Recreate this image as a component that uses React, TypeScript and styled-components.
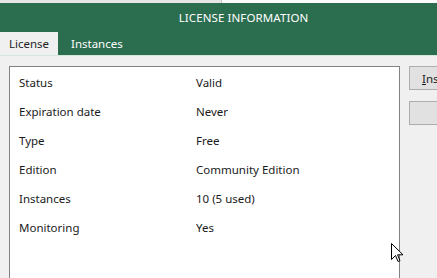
import React from 'react'
import styled, { createGlobalStyle } from 'styled-components'

const GlobalStyle = createGlobalStyle`
  html, body {
    margin: 0;
    padding: 0;
    background: #f0f0f0;
    font-family: 'Noto Sans', 'Open Sans', sans-serif;
    overflow: hidden;
  }
`

const Page = styled.div`
  position: relative;
  width: 437px;
  height: 278px;
  display: flex;
  flex-direction: column;
  overflow: hidden;
`

const TopStrip = styled.div`
  display: flex;
  height: 3px;
`

const StripSeg = styled.div<{ $light?: boolean }>`
  width: ${(p) => (p.$light ? 'auto' : '221px')};
  flex: ${(p) => (p.$light ? '1' : 'none')};
  background: ${(p) => (p.$light ? '#fbfbfb' : '#e6e6e6')};
  border-right: ${(p) => (p.$light ? 'none' : '1px solid #c9c9c9')};
`

const Header = styled.div`
  background: #2b6d4f;
  display: flex;
  flex-direction: column;
`

const Title = styled.div`
  height: 29px;
  display: flex;
  align-items: center;
  justify-content: center;
  padding-left: 50px;
  color: #ffffff;
  font-size: 11.5px;
  letter-spacing: 0.1px;
`

const TabRow = styled.div`
  display: flex;
  height: 23px;
`

const Tab = styled.div<{ $active?: boolean }>`
  display: flex;
  align-items: center;
  padding: 0 ${(p) => (p.$active ? '10px' : '13px')} 0 ${(p) => (p.$active ? '9px' : '13px')};
  width: ${(p) => (p.$active ? '58px' : 'auto')};
  box-sizing: border-box;
  background: ${(p) => (p.$active ? '#f0f0f0' : 'transparent')};
  color: ${(p) => (p.$active ? '#1e1e1e' : '#ffffff')};
  font-size: 11.5px;
`

const Body = styled.div`
  flex: 1;
  display: flex;
  gap: 9px;
  padding: 10px 0 0 9px;
  border-top: 1px solid #d4e7dc;
`

const Panel = styled.div`
  width: 391px;
  flex-shrink: 0;
  box-sizing: border-box;
  background: #ffffff;
  border: 1px solid #828282;
  border-bottom: none;
  padding: 1px 0 0 9px;
  display: flex;
  flex-direction: column;
`

const Row = styled.div`
  height: 29px;
  display: flex;
  align-items: center;
  font-size: 11.5px;
  color: #1a1a1a;
`

const Label = styled.span`
  width: 177px;
`

const Side = styled.div`
  display: flex;
  flex-direction: column;
  gap: 11px;
  flex: 1;
  min-width: 0;
`

const Button = styled.div`
  height: 24px;
  box-sizing: border-box;
  background: #e1e1e1;
  border: 1px solid #adadad;
  border-right: none;
  padding-left: 12px;
  display: flex;
  align-items: center;
  font-size: 11.5px;
  color: #1a1a1a;
  white-space: nowrap;
  overflow: hidden;

  u {
    text-decoration: underline;
  }
`

const Cursor = styled.svg`
  position: absolute;
  left: 391px;
  top: 243px;
`

const ROWS = [
  ['Status', 'Valid'],
  ['Expiration date', 'Never'],
  ['Type', 'Free'],
  ['Edition', 'Community Edition'],
  ['Instances', '10 (5 used)'],
  ['Monitoring', 'Yes'],
]

export default function App() {
  return (
    <Page>
      <GlobalStyle />
      <TopStrip>
        <StripSeg />
        <StripSeg $light />
      </TopStrip>
      <Header>
        <Title>LICENSE INFORMATION</Title>
        <TabRow>
          <Tab $active>License</Tab>
          <Tab>Instances</Tab>
        </TabRow>
      </Header>
      <Body>
        <Panel>
          {ROWS.map(([label, value]) => (
            <Row key={label}>
              <Label>{label}</Label>
              <span>{value}</span>
            </Row>
          ))}
        </Panel>
        <Side>
          <Button>
            <u>I</u>nstall
          </Button>
          <Button />
        </Side>
      </Body>
      <Cursor width="13" height="21" viewBox="0 0 13 21">
        <path
          d="M0.5 0.5 L0.5 16.5 L4.5 12.5 L7 18.5 L9 17.7 L6.6 11.8 L12 11.8 Z"
          fill="#ffffff"
          stroke="#000000"
          strokeWidth="1"
          strokeLinejoin="miter"
        />
      </Cursor>
    </Page>
  )
}
